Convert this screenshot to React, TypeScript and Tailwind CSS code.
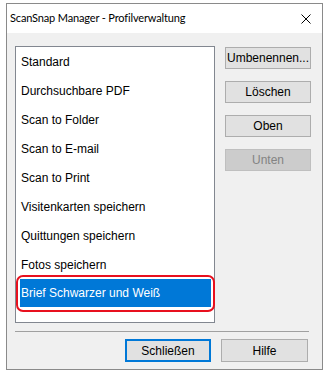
const profiles = [
  'Standard',
  'Durchsuchbare PDF',
  'Scan to Folder',
  'Scan to E-mail',
  'Scan to Print',
  'Visitenkarten speichern',
  'Quittungen speichern',
  'Fotos speichern',
  'Brief Schwarzer und Weiß',
];

function SideButton({ label, disabled }: { label: string; disabled?: boolean }) {
  return (
    <button
      className={
        disabled
          ? 'h-[22px] w-[86px] border border-[#bfbfbf] bg-[#cccccc] text-[12px] text-[#838383]'
          : 'h-[22px] w-[86px] border border-[#adadad] bg-[#e1e1e1] text-[12px] text-black'
      }
    >
      {label}
    </button>
  );
}

export default function App() {
  const selected = profiles.length - 1;

  return (
    <div
      className="h-[376px] w-[328px] bg-white pl-[6px] pt-[3px]"
      style={{ fontFamily: '"Liberation Sans", Arial, sans-serif' }}
    >
      <div className="flex h-[367px] w-[317px] flex-col border border-[#8a8a8a] bg-[#f0f0f0]">
        {/* title bar */}
        <div className="flex h-[29px] shrink-0 items-center justify-between bg-white pl-[3px] pr-[11px]">
          <span className="text-[11px] tracking-[-0.15px] text-black" style={{ fontFamily: 'Lato, sans-serif' }}>
            ScanSnap Manager - Profilverwaltung
          </span>
          <svg width="10" height="10" viewBox="0 0 10 10" className="text-black">
            <path d="M0.5 0.5 L9.5 9.5 M9.5 0.5 L0.5 9.5" stroke="currentColor" strokeWidth="1" fill="none" />
          </svg>
        </div>

        <div className="flex flex-1 flex-col px-[8px] pt-[13px]">
          <div className="flex gap-[10px]">
            {/* profile list */}
            <div className="h-[277px] w-[200px] border border-[#828790] bg-white">
              {profiles.map((name, i) =>
                i === selected ? (
                  <div key={name} className="relative h-[29px] pl-[4px] pr-[3px]">
                    <div className="flex h-[28px] items-center bg-[#0078d7] pl-[1px] text-[12px] text-white">
                      {name}
                    </div>
                    <span className="pointer-events-none absolute left-0 right-[-1px] top-[-4px] h-[37px] rounded-[7px] border-2 border-[#e8101e]" />
                  </div>
                ) : (
                  <div key={name} className="flex h-[29px] items-center pl-[5px] text-[12px] text-black">
                    {name}
                  </div>
                ),
              )}
            </div>

            {/* action buttons */}
            <div className="flex flex-col gap-[12px] pt-[1px]">
              <SideButton label="Umbenennen..." />
              <SideButton label="Löschen" />
              <SideButton label="Oben" />
              <SideButton label="Unten" disabled />
            </div>
          </div>

          <div className="mt-[8px] mr-[5px] h-px bg-[#a0a0a0]" />

          <div className="mt-[7px] flex justify-end gap-[10px] pr-[6px]">
            <button className="h-[23px] w-[86px] border-2 border-[#0078d7] bg-[#e1e1e1] text-[12px] text-black">
              Schließen
            </button>
            <button className="h-[23px] w-[87px] border border-[#adadad] bg-[#e1e1e1] text-[12px] text-black">
              Hilfe
            </button>
          </div>
        </div>
      </div>
    </div>
  );
}
